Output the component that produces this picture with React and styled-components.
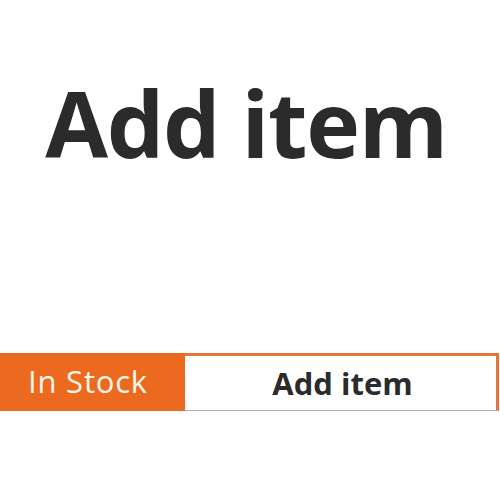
import React from "react";
import styled, { createGlobalStyle } from "styled-components";

const GlobalStyle = createGlobalStyle`
  html, body {
    margin: 0;
    padding: 0;
    background: #ffffff;
  }
  body {
    font-family: "Open Sans", "Noto Sans", "Liberation Sans", sans-serif;
    color: #2b2b2b;
  }
`;

const Page = styled.div`
  width: 500px;
  height: 500px;
  display: flex;
  flex-direction: column;
  overflow: hidden;
`;

const Heading = styled.h1`
  margin: 0;
  padding-top: 78px;
  padding-right: 8px;
  font-size: 91px;
  font-weight: 700;
  line-height: 1;
  text-align: center;
  letter-spacing: -1.3px;
  color: #2b2b2b;
`;

const StockBar = styled.div`
  display: flex;
  width: 499px;
  height: 58px;
  margin-top: 184px;
`;

const StockLabel = styled.div`
  width: 185px;
  display: flex;
  align-items: center;
  padding: 0 0 2px 28px;
  box-sizing: border-box;
  background: #eb6a1f;
  color: #fff6ea;
  font-size: 31px;
  font-weight: 400;
  letter-spacing: 0.8px;
`;

const AddButton = styled.button`
  flex: 1;
  display: flex;
  align-items: center;
  justify-content: center;
  padding: 0 0 0 4px;
  background: #ffffff;
  border: none;
  border-top: 3px solid #e5733a;
  border-right: 3px solid #e5733a;
  border-bottom: 1px solid #b9b2ab;
  font-family: inherit;
  font-size: 31px;
  font-weight: 700;
  color: #2b2b2b;
  cursor: pointer;
`;

const App = () => {
  return (
    <>
      <GlobalStyle />
      <Page>
        <Heading>Add item</Heading>
        <StockBar>
          <StockLabel>In Stock</StockLabel>
          <AddButton type="button">Add item</AddButton>
        </StockBar>
      </Page>
    </>
  );
};

export default App;
